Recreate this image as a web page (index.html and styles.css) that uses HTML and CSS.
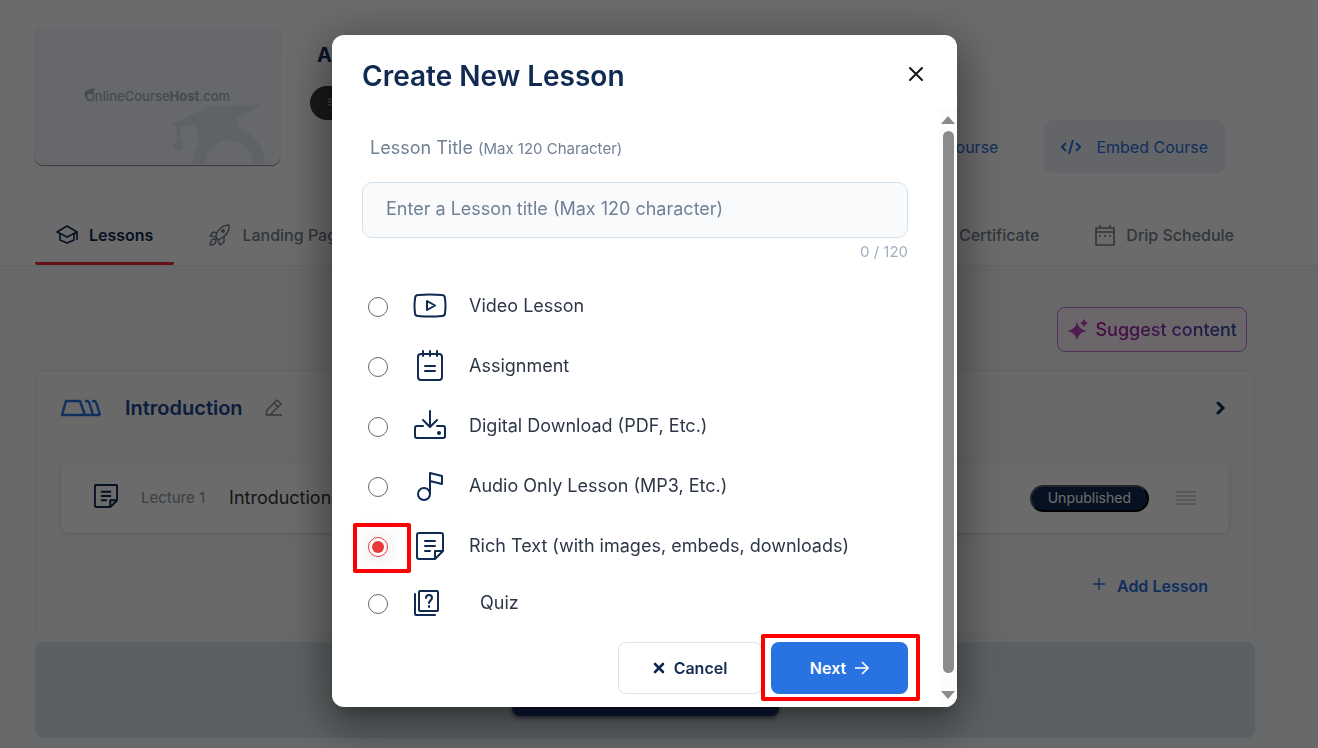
FILE: index.html
```html
<!DOCTYPE html>
<html lang="en">
<head>
<meta charset="utf-8">
<meta name="viewport" content="width=device-width, initial-scale=1">
<title>Create New Lesson</title>
<link rel="stylesheet" href="styles.css">
</head>
<body>
<div class="page">
  <header class="top">
    <div class="course">
      <div class="thumb">
        <svg class="thumb-art" viewBox="0 0 246 138" aria-hidden="true">
          <path fill="#e3ebf2" d="M137 97l41-18 47-1v2l-22 11 2 11a38 38 0 0 1 26 36h-12a24 24 0 0 0-48 0h-12c0-9 1-14 6-20l-4-19-15 1v14a5 5 0 1 1-4 0V99z"/>
          <path fill="#a4b0c0" d="M50 65l6-3h5l-3 3v3l-4-1-3 1v3h-1z"/>
        </svg>
        <span class="brand">OnlineCourse<b>Host</b>.com</span>
      </div>
      <div class="summary">
        <h1 class="course-name">A</h1>
        <button class="pill" type="button" aria-label="Course menu">
          <svg width="16" height="12" viewBox="0 0 16 12"><path d="M0 2h14M0 5h14M0 8h14" stroke="#ccc" stroke-width="1"/></svg>
        </button>
      </div>
      <div class="actions">
        <a class="link" href="#course">Course</a>
        <button class="embed" type="button">
          <svg width="20" height="16" viewBox="0 0 20 16"><path d="M5 4L1 8l4 4M15 4l4 4-4 4M12 1L8 15" fill="none" stroke="currentColor" stroke-width="2"/></svg>
          Embed Course
        </button>
      </div>
    </div>
    <nav class="tabs">
      <a class="tab active" href="#lessons">
        <svg width="22" height="20" viewBox="0 0 22 20"><path d="M1 7l10-6 10 6-10 5zM4 9v6l7 3 7-3V9M21 7v8" fill="none" stroke="currentColor" stroke-width="1.6" stroke-linejoin="round"/></svg>
        Lessons
      </a>
      <a class="tab" href="#landing">
        <svg width="22" height="22" viewBox="0 0 22 22"><path d="M7 13C7 7 13 1 20 1c1 7-4 12-11 15zM8 9L4 8 1 12l6 1M9 16l2 5 4-3v-5M6 15c-4 0-4 2-5 6 4 0 6-1 6-5z" fill="none" stroke="currentColor" stroke-width="1.5" stroke-linejoin="round"/><circle cx="14" cy="7" r="2" fill="currentColor"/></svg>
        Landing Page
      </a>
      <a class="tab push" href="#certificate">Certificate</a>
      <a class="tab" href="#drip">
        <svg width="20" height="21" viewBox="0 0 20 21"><path d="M1 3h18v17H1zM1 7h18M5 0v3M15 0v3" fill="none" stroke="currentColor" stroke-width="1.6"/><path d="M4 11h2M9 11h2M14 11h2" stroke="currentColor" stroke-width="1.6"/></svg>
        Drip Schedule
      </a>
    </nav>
  </header>

  <main class="content">
    <button class="suggest" type="button">
      <svg width="22" height="22" viewBox="0 0 22 22"><path fill="#c147bd" d="M10 3q2 8 10 9-8 1-10 9-2-8-10-9 8-1 10-9zM17 0q1 3 4 4-3 1-4 4-1-3-4-4 3-1 4-4z"/></svg>
      <span class="suggest-text">Suggest content</span>
    </button>
    <section class="section">
      <div class="section-head">
        <svg width="40" height="18" viewBox="0 0 40 18"><path d="M5 2h14l5 14H1zM24 2h2q2 0 3 4l3 10M31 2h2q2 0 3 4l3 10M24 16h15" fill="none" stroke="#2771e1" stroke-width="2.400" stroke-linejoin="round"/></svg>
        <h2 class="section-name">Introduction</h2>
        <button class="icon-button" type="button" aria-label="Edit section">
          <svg width="18" height="18" viewBox="0 0 18 18"><path d="M1 16l1-5L12 1l4 4L5 16H1zm4 0h12M9 4l4 4" fill="none" stroke="#7f828c" stroke-width="1.4" stroke-linejoin="round"/></svg>
        </button>
        <button class="icon-button push" type="button" aria-label="Expand section">
          <svg width="10" height="14" viewBox="0 0 10 14"><path d="M2 2l5 5-5 5" fill="none" stroke="#102a52" stroke-width="3" stroke-linecap="round"/></svg>
        </button>
      </div>
      <div class="lecture">
        <svg class="lecture-icon" width="24" height="24" viewBox="0 0 28 28"><path d="M3 1h22a2 2 0 0 1 2 2v16l-8 8H3a2 2 0 0 1-2-2V3a2 2 0 0 1 2-2zM19 27v-8h8M8 9h12M8 14h12M8 19h7" fill="none" stroke="currentColor" stroke-width="2.400" stroke-linejoin="round"/></svg>
        <span class="lecture-no">Lecture 1</span>
        <span class="lecture-name">Introduction</span>
        <button class="status push" type="button">Unpublished</button>
        <svg width="20" height="14" viewBox="0 0 20 14"><path d="M0 1h20M0 5h20M0 9h20M0 13h20" stroke="#98a2b3" stroke-width="1"/></svg>
      </div>
      <button class="add" type="button">
        <svg width="12" height="16" viewBox="0 0 12 16"><path d="M6 0v12M0 6h12" stroke="currentColor" stroke-width="1.4"/></svg>
        Add Lesson
      </button>
    </section>
    <div class="band"><button class="band-button" type="button" aria-label="Add section"></button></div>
  </main>
</div>

<div class="overlay">
  <form class="modal" role="dialog" aria-labelledby="dialog-title">
    <div class="modal-head">
      <h2 class="modal-title" id="dialog-title">Create New Lesson</h2>
      <button class="icon-button" type="button" aria-label="Close">
        <svg width="16" height="16" viewBox="0 0 16 16"><path d="M2 2l12 12M14 2L2 14" stroke="#16181d" stroke-width="2" stroke-linecap="round"/></svg>
      </button>
    </div>
    <div class="modal-body">
      <div class="fields">
        <label class="label" for="title">Lesson Title <small class="hint">(Max 120 Character)</small></label>
        <input class="input" id="title" type="text" placeholder="Enter a Lesson title (Max 120 character)">
        <div class="counter">0 / 120</div>
        <div class="options">
          <label class="option"><span class="pick"><input class="radio" type="radio" name="kind"></span>
            <svg class="kind" width="34" height="34" viewBox="0 0 34 34"><path d="M5 6Q17 5 29 6q3 0 3 4 1 7 0 14 0 3-3 3-12 1-24 0-3 0-3-3-1-7 0-14 0-4 3-4zM14 12v9l8-4.500z"/></svg>
            <span>Video Lesson</span></label>
          <label class="option"><span class="pick"><input class="radio" type="radio" name="kind"></span>
            <svg class="kind" width="34" height="34" viewBox="0 0 34 34"><path d="M8 5h18q3 0 3 3v20q0 3-3 3H8q-3 0-3-3V8q0-3 3-3zM10 2v5M17 2v5M24 2v5M12 17h10M12 22h10"/></svg>
            <span>Assignment</span></label>
          <label class="option"><span class="pick"><input class="radio" type="radio" name="kind"></span>
            <svg class="kind" width="34" height="34" viewBox="0 0 34 34"><path d="M17 2v15M10 11l7 7 7-7M10 17H4q-2 0-2 2v8q0 2 2 2h26q2 0 2-2v-8q0-2-2-2h-6"/><circle class="dot" cx="26" cy="24" r="2"/></svg>
            <span>Digital Download (PDF, Etc.)</span></label>
          <label class="option"><span class="pick"><input class="radio" type="radio" name="kind"></span>
            <svg class="kind" width="34" height="34" viewBox="0 0 34 34"><circle cx="11" cy="25" r="6"/><path d="M17 25V4l12 3v8l-12-3"/></svg>
            <span>Audio Only Lesson (MP3, Etc.)</span></label>
          <label class="option"><span class="pick"><input class="radio" type="radio" name="kind" checked><span class="mark mark-radio"></span></span>
            <svg class="kind" width="34" height="34" viewBox="-3 -3 34 34"><path d="M3 1h22a2 2 0 0 1 2 2v16l-8 8H3a2 2 0 0 1-2-2V3a2 2 0 0 1 2-2zM19 27v-8h8M9 9h10M9 14h10M9 19h5"/></svg>
            <span>Rich Text (with images, embeds, downloads)</span></label>
          <label class="option option-quiz"><span class="pick"><input class="radio" type="radio" name="kind"></span>
            <svg class="kind" width="34" height="34" viewBox="0 0 34 34"><path d="M7 5h17q1 0 1 1v18q0 1-1 1H7q-1 0-1-1V6q0-1 1-1zM2 8v20q0 1 1 1h19"/><path d="M13 12q0-3 3-3t3 3q0 1-2 3-1 1-1 2M16 20v1"/></svg>
            <span>Quiz</span></label>
        </div>
        <div class="buttons">
          <button class="button cancel" type="button">
            <svg width="12" height="12" viewBox="0 0 12 12"><path d="M2 2l8 8M10 2l-8 8" stroke="currentColor" stroke-width="2.600" stroke-linecap="round"/></svg>
            Cancel
          </button>
          <div class="next-wrap">
            <button class="button next" type="submit">Next
              <svg width="14" height="14" viewBox="0 0 14 14"><path d="M0 7h13M7 1l6 6-6 6" fill="none" stroke="currentColor" stroke-width="1.600"/></svg>
            </button>
            <span class="mark mark-next"></span>
          </div>
        </div>
      </div>
      <div class="scrollbar" aria-hidden="true">
        <svg width="14" height="8" viewBox="0 0 14 8"><path d="M0 8l7-8 7 8z" fill="#8b8b8b"/></svg>
        <div class="thumb-bar"></div>
        <svg width="14" height="8" viewBox="0 0 14 8"><path d="M0 0l7 8 7-8z" fill="#8b8b8b"/></svg>
      </div>
    </div>
  </form>
</div>
</body>
</html>
```
FILE: styles.css
```css
* { box-sizing: border-box; }
body { margin: 0; font: 16px/24px Inter, "Liberation Sans", sans-serif; color: #102a52; background: #f5f7fb; overflow: hidden; }
button, input { font: inherit; }
button { cursor: pointer; }
h1, h2 { margin: 0; }
a { text-decoration: none; }
svg { flex: none; display: block; }
.page { min-height: 100vh; }
.push { margin-left: auto; }

.top { background: #fff; padding: 27px 63px 0 35px; border-bottom: 1px solid #e6e9ed; }
.course { display: flex; }
.thumb { position: relative; width: 245px; height: 138px; border-radius: 8px; background: #f5f7ff; overflow: hidden; box-shadow: 0 1px 1px #888; display: grid; place-items: center; }
.thumb-art { position: absolute; inset: 0; }
.brand { position: relative; font: 500 13px/16px Inter, sans-serif; color: #a4b0c0; }
.summary { padding: 16px 0 0 30px; }
.course-name { font-size: 20px; line-height: 24px; padding-left: 7px; }
.pill { display: flex; align-items: center; width: 120px; height: 34px; margin-top: 19px; padding: 0 18px; border: 0; border-radius: 17px; background: #3c3c3c; }
.actions { display: flex; align-items: center; gap: 46px; margin: 93px 30px 0 auto; height: 53px; }
.link { color: #2771e1; }
.embed { display: flex; align-items: center; gap: 15px; height: 53px; padding: 0 17px; border: 0; border-radius: 8px; background: #ecf1f7; color: #2771e1; }
.tabs { display: flex; gap: 14px; margin-top: 33px; }
.tab { display: flex; align-items: center; gap: 11px; height: 59px; padding: 2px 21px 0; border-bottom: 3px solid transparent; color: #75808f; font-weight: 500; }
.active { color: #102a52; font-weight: 600; border-color: #f02b36; border-radius: 2px; }

.content { display: flex; flex-direction: column; padding: 41px 63px 0 35px; }
.suggest { align-self: flex-end; display: flex; align-items: center; gap: 6px; height: 45px; margin-right: 8px; padding: 0 9px; border: 1px solid #c774df; border-radius: 8px; background: #fff3fb; font-size: 18px; font-weight: 500; }
.suggest-text { background: linear-gradient(90deg, #b7149b, #8135b2, #254d9d); background-clip: text; color: transparent; }
.section { display: flex; flex-direction: column; height: 264px; margin-top: 18px; padding: 0 25px; border: 1px solid #e6ebee; border-radius: 8px; background: #f8fbf8; }
.section-head { display: flex; align-items: center; height: 74px; margin-bottom: 18px; }
.section-name { margin: 0 22px 0 24px; color: #1c4594; font-size: 20px; line-height: 24px; font-weight: 600; }
.icon-button { display: flex; padding: 0; border: 0; background: none; }
.section-head .push { margin-right: 3px; }
.lecture { display: flex; align-items: center; height: 70px; padding: 0 33px; border-radius: 8px; background: #fff; box-shadow: 0 1px 4px #d5d8dc; }
.lecture-icon { margin-bottom: 4px; }
.lecture-no { margin: 0 24px 0 23px; color: #8c95a2; font-size: 15px; }
.lecture-name { color: #333; font-size: 18px; }
.status { height: 27px; margin-right: 27px; padding: 0 16px; border: 2px outset #555; border-radius: 14px; background: #102a52; color: #fff; font-size: 14px; line-height: 20px; }
.add { align-self: flex-end; display: flex; align-items: center; gap: 12px; margin: 41px 21px 0 0; padding: 0; border: 0; background: none; color: #2771e1; font-weight: 600; }
.band { display: flex; justify-content: center; height: 96px; margin-top: 8px; border-radius: 8px; background: #d9e5e9; }
.band-button { width: 267px; height: 52px; margin-top: 22px; border: 0; border-radius: 8px; background: #1b3a7a; box-shadow: 0 2px 4px #667; }

.overlay { position: fixed; inset: 0; display: flex; justify-content: center; align-items: flex-start; padding: 35px 29px 41px 0; background: rgba(0, 0, 0, .58); }
.modal { width: 625px; max-width: 94vw; border-radius: 12px; background: #fff; overflow: hidden; box-shadow: 0 11px 15px -7px rgba(0, 0, 0, .2), 0 24px 38px 3px rgba(0, 0, 0, .14), 0 9px 46px 8px rgba(0, 0, 0, .3); }
.modal-head { display: flex; justify-content: space-between; align-items: center; height: 73px; padding: 4px 33px 0 30px; }
.modal-title { padding-top: 4px; font-size: 28px; line-height: 36px; font-weight: 600; }
.modal-body { display: flex; }
.fields { flex: 1; padding: 28px 31px 13px 30px; }
.label { display: block; padding-left: 8px; color: #718096; font-size: 18px; line-height: 24px; }
.hint { font-size: 15px; }
.input { display: block; width: 100%; height: 56px; margin-top: 21px; padding: 0 23px 4px; border: 1px solid #d5e2ec; border-radius: 10px; background: #f8fafc; color: #102a52; font-size: 18px; }
.input::placeholder { color: #718096; opacity: 1; }
.counter { margin: 4px 0 14px; color: #a0aec0; font-size: 15px; line-height: 20px; text-align: right; }
.option { display: flex; align-items: center; height: 60px; color: #2d3748; font-size: 18px; }
.option-quiz { height: 54px; }
.option-quiz span:last-child { padding-left: 11px; }
.pick { position: relative; display: flex; padding-left: 6px; }
.radio { appearance: none; display: grid; place-items: center; width: 20px; height: 20px; margin: 1px 0 0; border: 1px solid #666; border-radius: 50%; background: #fff; }
.radio:checked { border-color: #ea3a3d; box-shadow: 0 0 22px 6px rgba(0, 0, 0, .06); }
.radio:checked::before { content: ""; width: 12px; height: 12px; border-radius: 50%; background: #ea3a3d; }
.kind { margin: 0 22px 0 25px; fill: none; stroke: #102a52; stroke-width: 2; stroke-linecap: round; stroke-linejoin: round; }
.kind .dot { fill: #102a52; stroke: none; }
.buttons { display: flex; justify-content: flex-end; gap: 9px; margin-top: 12px; }
.button { display: flex; align-items: center; justify-content: center; gap: 9px; height: 52px; border-radius: 8px; font-weight: 600; }
.cancel { width: 144px; border: 1px solid #dbe3ec; background: #fff; color: #102a52; }
.next-wrap { position: relative; }
.next { width: 137px; border: 0; background: #2972e2; color: #fff; }
.mark { position: absolute; border: 4px solid #f00; border-radius: 2px; pointer-events: none; }
.mark-radio { left: -9px; top: -13px; width: 58px; height: 50px; }
.mark-next { inset: -8px -12px -7px -10px; }
.scrollbar { display: flex; flex-direction: column; align-items: center; width: 18px; padding: 8px 0; background: #fcfcfc; }
.thumb-bar { flex: 1; width: 11px; margin: 7px 0 18px; border-radius: 6px; background: #8b8b8b; }
```
